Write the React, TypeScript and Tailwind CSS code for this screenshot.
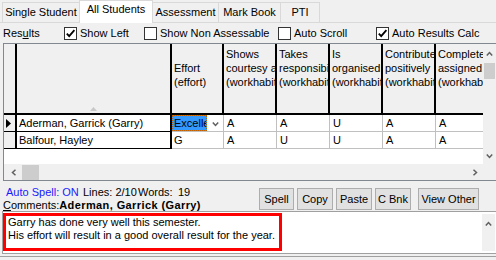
import React from "react";

type Dir = "up" | "down" | "left" | "right";

function Chev({ dir }: { dir: Dir }) {
  const pts: Record<Dir, string> = {
    up: "0.8,4.5 3.5,1.5 6.2,4.5",
    down: "0.8,1.5 3.5,4.5 6.2,1.5",
    left: "4.5,0.8 1.5,3.5 4.5,6.2",
    right: "1.5,0.8 4.5,3.5 1.5,6.2",
  };
  const horiz = dir === "up" || dir === "down";
  return (
    <svg
      width={horiz ? 7 : 6}
      height={horiz ? 6 : 7}
      viewBox={horiz ? "0 0 7 6" : "0 0 6 7"}
      className="block"
    >
      <polyline points={pts[dir]} fill="none" stroke="#606060" strokeWidth="1.5" />
    </svg>
  );
}

function Check({ checked, label, wrap }: { checked: boolean; label: string; wrap: string }) {
  return (
    <div className={`flex items-center shrink-0 ${wrap}`}>
      <div className="w-[13px] h-[13px] border border-[#333333] bg-white shrink-0 flex items-center justify-center">
        {checked && (
          <svg width="11" height="11" viewBox="0 0 11 11" className="block">
            <path d="M1.8 5.6 L4.2 8.2 L9.4 2.2" fill="none" stroke="#000" strokeWidth="1.8" />
          </svg>
        )}
      </div>
      <span className="ml-[3px] whitespace-nowrap">{label}</span>
    </div>
  );
}

const tabs = [
  { label: "Single Student", w: "w-[78px]", active: false },
  { label: "All Students", w: "w-[74px]", active: true },
  { label: "Assessment", w: "w-[67px]", active: false },
  { label: "Mark Book", w: "w-[63px]", active: false },
  { label: "PTI", w: "w-[40px]", active: false },
];

const cols = [
  { w: "w-[52px]", lines: ["", "Effort", "(effort)"] },
  { w: "w-[53px]", lines: ["Shows", "courtesy a", "(workhabit"] },
  { w: "w-[53px]", lines: ["Takes", "responsibi", "(workhabit"] },
  { w: "w-[53px]", lines: ["Is", "organised", "(workhabit"] },
  { w: "w-[53px]", lines: ["Contribute", "positively", "(workhabit"] },
  { w: "w-[53px]", lines: ["Complete", "assigned", "(workhab"] },
];

const rows = [
  { name: "Aderman, Garrick (Garry)", effort: "Excelle", vals: ["A", "A", "U", "A", "A"], sel: true },
  { name: "Balfour, Hayley", effort: "G", vals: ["A", "U", "U", "A", "A"], sel: false },
];

const buttons = [
  { label: "Spell", w: "w-[35px]", extra: "" },
  { label: "Copy", w: "w-[36px]", extra: "" },
  { label: "Paste", w: "w-[36px]", extra: "" },
  { label: "C Bnk", w: "w-[36px]", extra: "" },
  { label: "View Other", w: "w-[61px]", extra: "ml-[4px]" },
];

export default function App() {
  return (
    <div className="w-[496px] h-[260px] overflow-hidden bg-[#f0f0f0] text-black text-[11px] leading-[13px] font-['Liberation_Sans',Arial,sans-serif]">
      {/* Tabs */}
      <div className="flex items-end h-[23px] border-b border-[#d9d9d9] pl-[2px]">
        {tabs.map((t, i) =>
          t.active ? (
            <div
              key={t.label}
              className={`${t.w} h-[23px] mb-[-1px] ${i > 0 ? "-ml-px" : ""} bg-white border border-b-0 border-[#d9d9d9] flex justify-center pt-[2px] whitespace-nowrap`}
            >
              {t.label}
            </div>
          ) : (
            <div
              key={t.label}
              className={`${t.w} h-[20px] ${i > 0 ? "-ml-px" : ""} bg-[#f0f0f0] border border-b-0 border-[#d9d9d9] flex justify-center pt-[3px] whitespace-nowrap`}
            >
              {t.label}
            </div>
          )
        )}
      </div>

      {/* Options row */}
      <div className="flex items-center h-[20px] pl-[3px]">
        <div className="w-[61px] shrink-0">
          Res<span className="underline">u</span>lts
        </div>
        <Check checked label="Show Left" wrap="w-[80px]" />
        <Check checked={false} label="Show Non Assessable" wrap="w-[134px]" />
        <Check checked={false} label="Auto Scroll" wrap="w-[98px]" />
        <Check checked label="Auto Results Calc" wrap="w-[110px]" />
      </div>

      {/* Grid */}
      <div className="ml-[3px] h-[138px] border border-r-0 border-[#828790] flex flex-col">
        <div className="flex h-[120px]">
          <div className="w-[479px] bg-white overflow-hidden">
            {/* header */}
            <div className="flex h-[71px] border-b-2 border-black bg-[#f0f0f0]">
              <div className="w-[13px] shrink-0 border-r-2 border-black" />
              <div className="w-[155px] shrink-0 border-r-2 border-black flex items-end justify-center pb-[2px]">
                <svg width="7" height="4" viewBox="0 0 7 4" className="block">
                  <polygon points="0,4 3.5,0 7,4" fill="#c8c8c8" />
                </svg>
              </div>
              {cols.map((c, i) => (
                <div
                  key={i}
                  className={`${c.w} shrink-0 border-r-2 border-black pl-[2px] pt-[3px] overflow-hidden leading-[14px]`}
                >
                  {c.lines.map((l, j) => (
                    <div key={j} className="h-[14px] whitespace-nowrap overflow-hidden">
                      {l}
                    </div>
                  ))}
                </div>
              ))}
            </div>
            {/* rows */}
            {rows.map((r) => (
              <div key={r.name} className="flex h-[17px]">
                <div className="w-[13px] shrink-0 bg-[#f0f0f0] border-r-2 border-b border-black flex items-center pl-[2px]">
                  {r.sel && (
                    <svg width="5" height="9" viewBox="0 0 5 9" className="block">
                      <polygon points="0,0 5,4.5 0,9" fill="#000" />
                    </svg>
                  )}
                </div>
                <div className="w-[155px] shrink-0 border-r-2 border-b border-black pl-[2px] leading-[16px] whitespace-nowrap">
                  {r.name}
                </div>
                <div className="w-[52px] shrink-0 border-r border-b border-[#c0c0c0] leading-[16px] flex">
                  {r.sel ? (
                    <>
                      <div className="w-[35px] h-[16px] bg-[#3399ff] border border-dotted border-[#c06000] pl-[1px] leading-[14px] overflow-hidden whitespace-nowrap">
                        {r.effort}
                      </div>
                      <div className="flex-1 flex items-center justify-center pt-[1px]">
                        <Chev dir="down" />
                      </div>
                    </>
                  ) : (
                    <span className="pl-[2px]">{r.effort}</span>
                  )}
                </div>
                {r.vals.map((v, i) => (
                  <div
                    key={i}
                    className="w-[53px] shrink-0 border-r border-b border-[#c0c0c0] pl-[3px] leading-[16px]"
                  >
                    {v}
                  </div>
                ))}
              </div>
            ))}
          </div>
          {/* vertical scrollbar */}
          <div className="w-[13px] bg-[#f0f0f0] flex flex-col items-center">
            <div className="h-[19px] flex items-center pt-[1px]">
              <Chev dir="up" />
            </div>
            <div className="w-[11px] h-[16px] bg-[#cdcdcd]" />
            <div className="flex-1" />
            <div className="h-[17px] flex items-center">
              <Chev dir="down" />
            </div>
          </div>
        </div>
        {/* horizontal scrollbar */}
        <div className="flex h-[16px]">
          <div className="w-[479px] flex items-center bg-[#f0f0f0]">
            <div className="w-[17px] flex justify-center pl-[2px]">
              <Chev dir="left" />
            </div>
            <div className="w-[17px] h-[15px] bg-[#cdcdcd] ml-px" />
            <div className="flex-1" />
            <div className="w-[17px] flex justify-center">
              <Chev dir="right" />
            </div>
          </div>
          <div className="w-[13px] bg-[#f0f0f0]" />
        </div>
      </div>

      {/* Info + buttons */}
      <div className="flex h-[30px]">
        <div className="flex-1 flex flex-col pt-[5px]">
          <div className="flex h-[13px] whitespace-nowrap">
            <span className="w-[83px] pl-[6px] shrink-0 text-[#1a1aff]">Auto Spell: ON</span>
            <span className="w-[55px] shrink-0">Lines: 2/10</span>
            <span className="w-[40px] shrink-0">Words:</span>
            <span>19</span>
          </div>
          <div className="flex h-[13px] whitespace-nowrap pl-[3px]">
            <span>
              <span className="underline">C</span>omments:
            </span>
            <span className="font-bold tracking-[0.4px]">Aderman, Garrick (Garry)</span>
          </div>
        </div>
        <div className="flex gap-[3px] pt-[7px] pr-[17px]">
          {buttons.map((b) => (
            <div
              key={b.label}
              className={`${b.w} ${b.extra} h-[22px] bg-[#e1e1e1] border border-[#adadad] flex items-center justify-center whitespace-nowrap`}
            >
              {b.label}
            </div>
          ))}
        </div>
      </div>

      {/* Memo */}
      <div className="ml-[2px] h-[43px] border border-r-0 border-[#a0a0a0] bg-white flex">
        <div className="flex-1 pt-px pl-0">
          <div className="w-[279px] h-[38px] border-[3px] border-[#ff0000] pl-[2px] whitespace-nowrap leading-[13px]">
            <div>Garry has done very well this semester.</div>
            <div>His effort will result in a good overall result for the year.</div>
          </div>
        </div>
        <div className="w-[13px] my-[2px] mr-[1px] bg-[#f0f0f0] flex justify-center pt-[7px]">
          <Chev dir="up" />
        </div>
      </div>
      <div className="mt-[2px] border-t border-[#a0a0a0]" />
    </div>
  );
}
